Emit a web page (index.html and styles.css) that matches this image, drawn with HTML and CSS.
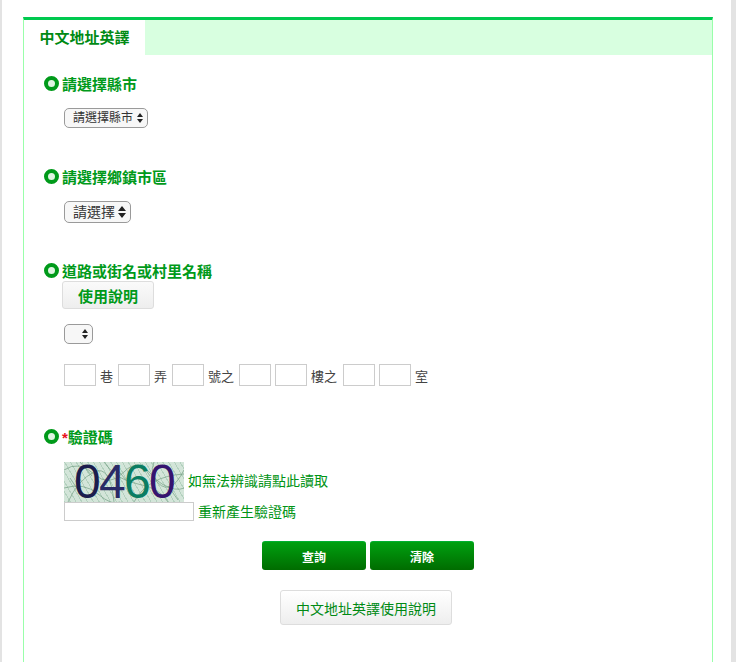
FILE: index.html
```html
<!DOCTYPE html>
<html lang="zh-Hant">
<head>
<meta charset="utf-8">
<title>中文地址英譯</title>
<link rel="stylesheet" href="styles.css">
</head>
<body>
<div class="page">
  <main class="panel">
    <div class="tabbar"><div class="tab">中文地址英譯</div></div>
    <form class="form">
      <section class="field field-city">
        <h3 class="label"><span class="dot"></span>請選擇縣市</h3>
        <div class="control"><select class="sel sel-small"><option>請選擇縣市</option></select></div>
      </section>
      <section class="field field-town">
        <h3 class="label"><span class="dot"></span>請選擇鄉鎮市區</h3>
        <div class="control"><select class="sel sel-big"><option>請選擇</option></select></div>
      </section>
      <section class="field field-road">
        <h3 class="label"><span class="dot"></span>道路或街名或村里名稱</h3>
        <button type="button" class="help">使用說明</button>
        <div class="control road-select"><select class="sel sel-empty"><option></option></select></div>
        <div class="addr">
          <input class="box" type="text"><span class="unit">巷</span>
          <input class="box" type="text"><span class="unit">弄</span>
          <input class="box" type="text"><span class="unit">號之</span>
          <input class="box" type="text"><input class="box" type="text"><span class="unit unit-wide">樓之</span>
          <input class="box" type="text"><input class="box" type="text"><span class="unit">室</span>
        </div>
      </section>
      <section class="field field-captcha">
        <h3 class="label"><span class="dot"></span><span class="star">*</span>驗證碼</h3>
        <div class="captcha-row">
          <div class="captcha"><span class="d1">0</span><span class="d2">4</span><span class="d3">6</span><span class="d4">0</span></div>
          <a class="link" href="#">如無法辨識請點此讀取</a>
        </div>
        <div class="code-row">
          <input class="code" type="text">
          <a class="link" href="#">重新產生驗證碼</a>
        </div>
      </section>
      <div class="actions">
        <button type="button" class="go">查詢</button>
        <button type="button" class="go">清除</button>
      </div>
      <div class="guide-row"><button type="button" class="guide">中文地址英譯使用說明</button></div>
    </form>
  </main>
</div>
</body>
</html>
```
FILE: styles.css
```css
* { box-sizing: border-box; }
html, body { margin: 0; height: 100%; }
body {
  background: #fff;
  font-family: "Liberation Sans", "Noto Sans CJK TC", sans-serif;
  color: #444;
  overflow: hidden;
}
.page {
  height: 662px;
  border-left: 2px solid #e3e3e3;
  border-right: 5px solid #e3e3e3;
  padding: 17px 18px 0 21px;
}
.panel {
  height: 645px;
  border-top: 3px solid #00c94f;
  border-left: 1px solid #99ffaa;
  border-right: 1px solid #99ffaa;
}
.tabbar { height: 35px; background: #d8ffe0; display: flex; }
.tab {
  width: 121px;
  background: #fff;
  color: #008a14;
  font-size: 15px;
  font-weight: 700;
  line-height: 35px;
  text-align: center;
}
.form { display: block; }
.field { padding-left: 20px; }
.field-city { padding-top: 20px; }
.field-town { padding-top: 40px; }
.field-road { padding-top: 39px; }
.field-captcha { padding-top: 42px; }
.label {
  margin: 0;
  height: 20px;
  display: flex;
  align-items: center;
  gap: 3px;
  color: #009a1a;
  font-size: 15px;
  font-weight: 700;
  line-height: 20px;
}
.dot {
  width: 15px;
  height: 15px;
  margin-bottom: 3px;
  border-radius: 50%;
  border: 4px solid #009a1a;
  background: #dff5e2;
  flex: none;
}
.star { color: #e8121c; margin-right: -3px; }
.control { padding-left: 20px; margin-top: 13px; display: flex; }
.sel {
  appearance: none;
  -webkit-appearance: none;
  display: block;
  height: 20px;
  border: 1px solid #9a9a9a;
  border-radius: 5px;
  background: #f7f7f7 url("data:image/svg+xml,%3Csvg xmlns='http://www.w3.org/2000/svg' width='7' height='11'%3E%3Cpath d='M3.5 0L7 4.5H0zM3.5 11L0 6.5H7z' fill='%23222'/%3E%3C/svg%3E") no-repeat right 4px center;
  background-size: 6px 10px;
  color: #333;
  font-family: inherit;
  font-size: 12px;
  padding: 0 12px 0 8px;
}
.sel-small { width: 84px; }
.sel-big { width: 67px; height: 22px; font-size: 14px; background-size: 8px 12px; padding-right: 10px; }
.sel-empty { width: 29px; }
.help {
  display: block;
  margin: -1px 0 0 18px;
  width: 92px;
  height: 28px;
  border: 1px solid #ddd;
  border-radius: 3px;
  background: linear-gradient(#fafafa, #eee);
  color: #009a1a;
  font-family: inherit;
  font-size: 15px;
  font-weight: 700;
  padding: 0;
}
.road-select { margin-top: 15px; }
.addr {
  margin-top: 20px;
  padding-left: 20px;
  display: flex;
  align-items: center;
  height: 22px;
  font-size: 13px;
}
.box {
  width: 32px;
  height: 22px;
  border: 1px solid #ccc;
  background: #fff;
  margin-right: 4px;
  padding: 0;
}
.unit { margin: 0 5px 0 0; white-space: nowrap; }
.unit-wide { margin-right: 6px; }
.captcha-row {
  margin: 14px 0 0 20px;
  display: flex;
  align-items: center;
  gap: 4px;
}
.captcha {
  width: 120px;
  height: 40px;
  display: flex;
  padding-left: 10px;
  background:
    url("data:image/svg+xml,%3Csvg xmlns='http://www.w3.org/2000/svg' width='120' height='40' fill='none' stroke='%23749f84' stroke-width='.7'%3E%3Cpath d='M0 8q15-10 30 4t30-2 30 6 30-8M4 40q10-22 26-30t20 30M40 0q12 18 34 22t30 18M70 40q14-26 50-28M0 26q20-6 34 6t22 8M90 0q-6 14 8 22t22 4M16 0l12 14M52 6l10 12M104 24l10 14M6 16l8 12M78 2l8 12'/%3E%3C/svg%3E"),
    repeating-linear-gradient(60deg, rgba(120,170,140,.35) 0 1px, transparent 1px 5px),
    #d3e5d9;
  font-size: 48px;
  line-height: 40px;
  letter-spacing: -1.7px;
  font-family: "Liberation Sans", sans-serif;
}
.d1 { color: #1b1d4d; }
.d2 { color: #2a2a66; }
.d3 { color: #0a7d62; }
.d4 { color: #35146f; }
.link { color: #009414; font-size: 14px; text-decoration: none; line-height: 20px; }
.captcha-row .link { margin-bottom: 2px; }
.code-row {
  margin: 0 0 0 20px;
  height: 19px;
  display: flex;
  align-items: flex-start;
  gap: 4px;
}
.code {
  width: 130px;
  height: 19px;
  border: 1px solid #ccc;
  background: #fff;
  padding: 0;
}
.actions {
  margin-top: 20px;
  padding-left: 238px;
  display: flex;
  gap: 4px;
}
.go {
  width: 104px;
  height: 29px;
  border: 0;
  border-top: 1px solid #00b030;
  border-radius: 3px;
  background: linear-gradient(#00a010, #006c00);
  color: #fff;
  font-family: inherit;
  font-size: 12px;
  font-weight: 700;
  padding: 0;
}
.guide-row { margin-top: 20px; padding-left: 256px; }
.guide {
  width: 172px;
  height: 35px;
  border: 1px solid #ddd;
  border-radius: 3px;
  background: linear-gradient(#fff, #eee);
  color: #008a14;
  font-family: inherit;
  font-size: 14px;
  padding: 0;
}
```
